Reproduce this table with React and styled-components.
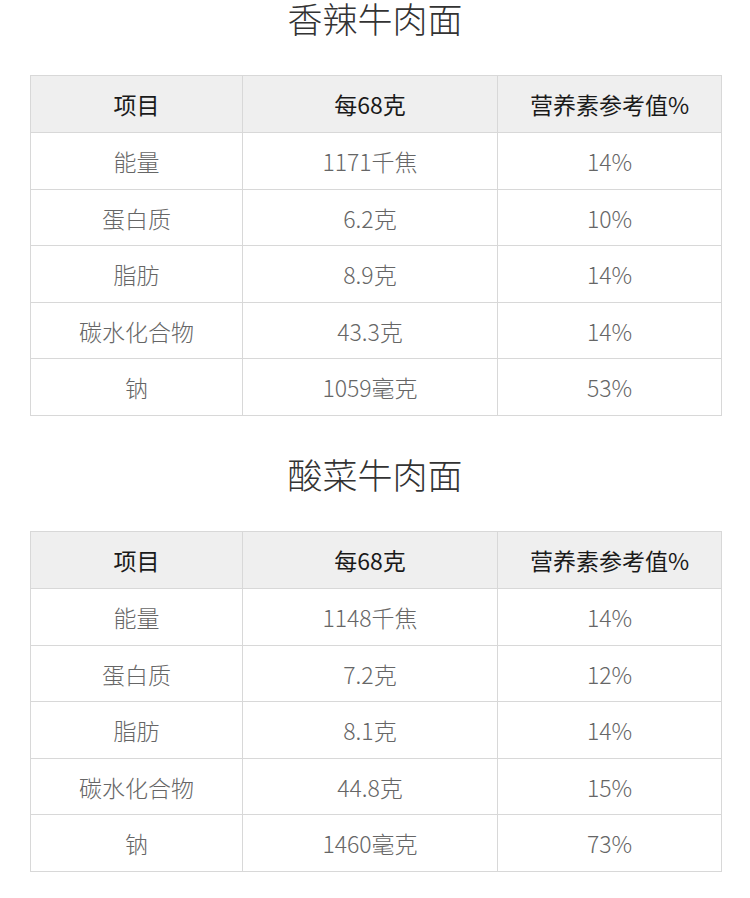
import React from 'react';
import styled, { createGlobalStyle } from 'styled-components';

const GlobalStyle = createGlobalStyle`
  html, body {
    margin: 0;
    padding: 0;
    background: #fff;
  }
  body {
    font-family: "Noto Sans CJK SC", "Noto Sans", sans-serif;
    overflow: hidden;
  }
`;

const Page = styled.div`
  width: 750px;
  height: 898px;
  overflow: hidden;
  display: flex;
  flex-direction: column;
`;

const Section = styled.section`
  display: flex;
  flex-direction: column;
  align-items: center;
  margin-bottom: 38px;
  &:first-child {
    margin-top: -2px;
  }
`;

const Title = styled.h2`
  margin: 0 0 37px;
  height: 40px;
  line-height: 40px;
  font-size: 35px;
  font-weight: 300;
  color: #333;
`;

const Table = styled.table`
  width: 691px;
  margin-left: 2px;
  border-collapse: collapse;
  table-layout: fixed;
  border: 1px solid #d8d8d8;
`;

const HeadCell = styled.th`
  height: 56.4px;
  padding: 0;
  background: #efefef;
  border: 1px solid #d8d8d8;
  font-size: 23px;
  font-weight: 400;
  color: #1a1a1a;
  text-align: center;
  vertical-align: middle;
`;

const Cell = styled.td`
  height: 55.5px;
  padding: 0;
  border: 1px solid #d8d8d8;
  font-size: 23px;
  font-weight: 300;
  color: #666;
  text-align: center;
  vertical-align: middle;
`;

const Col = styled.col`
  width: ${p => p.$w}px;
`;

const products = [
  {
    name: '香辣牛肉面',
    rows: [
      ['能量', '1171千焦', '14%'],
      ['蛋白质', '6.2克', '10%'],
      ['脂肪', '8.9克', '14%'],
      ['碳水化合物', '43.3克', '14%'],
      ['钠', '1059毫克', '53%'],
    ],
  },
  {
    name: '酸菜牛肉面',
    rows: [
      ['能量', '1148千焦', '14%'],
      ['蛋白质', '7.2克', '12%'],
      ['脂肪', '8.1克', '14%'],
      ['碳水化合物', '44.8克', '15%'],
      ['钠', '1460毫克', '73%'],
    ],
  },
];

const NutritionTable = ({ rows }) => (
  <Table>
    <colgroup>
      <Col $w={212} />
      <Col $w={255} />
      <Col $w={224} />
    </colgroup>
    <thead>
      <tr>
        <HeadCell>项目</HeadCell>
        <HeadCell>每68克</HeadCell>
        <HeadCell>营养素参考值%</HeadCell>
      </tr>
    </thead>
    <tbody>
      {rows.map((r, i) => (
        <tr key={i}>
          {r.map((c, j) => <Cell key={j}>{c}</Cell>)}
        </tr>
      ))}
    </tbody>
  </Table>
);

const App = () => {
  return (
    <Page>
      <GlobalStyle />
      {products.map(p => (
        <Section key={p.name}>
          <Title>{p.name}</Title>
          <NutritionTable rows={p.rows} />
        </Section>
      ))}
    </Page>
  );
};

export default App;
